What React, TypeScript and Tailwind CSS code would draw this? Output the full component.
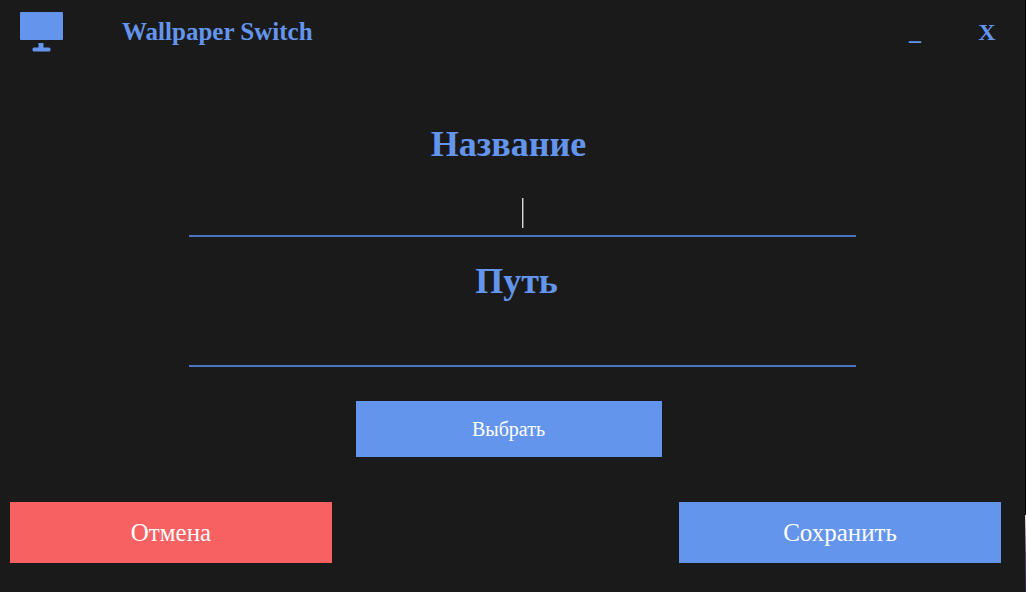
import { useState } from "react";

function MonitorIcon() {
  return (
    <svg viewBox="0 0 43 40" className="h-10 w-[43px] shrink-0 fill-[#6495ed]" aria-hidden="true">
      <rect x="0" y="0" width="43" height="28" rx="1" />
      <path d="M18.5 31h5v4.5H29a1.5 1.5 0 0 1 1.5 1.5v1a1.5 1.5 0 0 1-1.5 1.5H14a1.5 1.5 0 0 1-1.5-1.5v-1a1.5 1.5 0 0 1 1.5-1.5h4.5z" />
    </svg>
  );
}

const fieldClass =
  "block w-full border-b-2 border-[#4c74bf] bg-transparent text-center text-2xl text-white caret-transparent outline-none";

export default function App() {
  const [name, setName] = useState("");
  const [path, setPath] = useState("");

  return (
    <div className="flex min-h-screen bg-[#1a1a1b] font-['Liberation_Serif',serif] text-[#6495ed]">
      <main className="flex min-w-0 flex-1 flex-col">
        <header className="flex h-16 items-center pr-[14px] pl-5">
          <MonitorIcon />
          <h1 className="ml-[59px] flex-1 text-[25px] leading-8 font-bold">Wallpaper Switch</h1>
          <button type="button" aria-label="Свернуть" className="w-12 text-2xl leading-8 font-bold">
            _
          </button>
          <button type="button" aria-label="Закрыть" className="ml-6 w-12 text-2xl leading-8 font-bold">
            X
          </button>
        </header>

        <form className="flex flex-1 flex-col" onSubmit={(e) => e.preventDefault()}>
          <div className="flex flex-col items-center pt-[60px] pl-5">
            <label htmlFor="name" className="pr-7 text-4xl leading-10 font-bold">
              Название
            </label>
            <div className="relative mt-6 w-[66.4%]">
              <input
                id="name"
                className={`${fieldClass} h-[49px]`}
                value={name}
                onChange={(e) => setName(e.target.value)}
              />
              <span className="pointer-events-none absolute inset-x-0 top-[10px] mx-auto h-[30px] w-0.5 border-l border-[#d8d8d8] bg-[#6a6a6a]" />
            </div>
            <label htmlFor="path" className="mt-6 pr-3 text-4xl leading-10 font-bold">
              Путь
            </label>
            <input
              id="path"
              className={`${fieldClass} mt-6 h-[42px] max-w-[66.4%]`}
              value={path}
              onChange={(e) => setPath(e.target.value)}
            />
          </div>

          <button
            type="button"
            className="mt-[34px] mr-2 h-14 w-[306px] self-center bg-[#6495ed] text-xl text-white"
          >
            Выбрать
          </button>

          <div className="mt-auto flex justify-between pr-6 pb-[29px] pl-[10px]">
            <button type="button" className="h-[61px] w-[322px] bg-[#f86162] text-[25px] text-white">
              Отмена
            </button>
            <button type="submit" className="h-[61px] w-[322px] bg-[#6495ed] text-[25px] text-white">
              Сохранить
            </button>
          </div>
        </form>
      </main>
      <div className="flex w-px flex-col justify-end bg-black">
        <div className="h-[77px] bg-linear-to-b from-[#eee3d5] via-[#5a4668] to-[#2a2348]" />
      </div>
    </div>
  );
}
